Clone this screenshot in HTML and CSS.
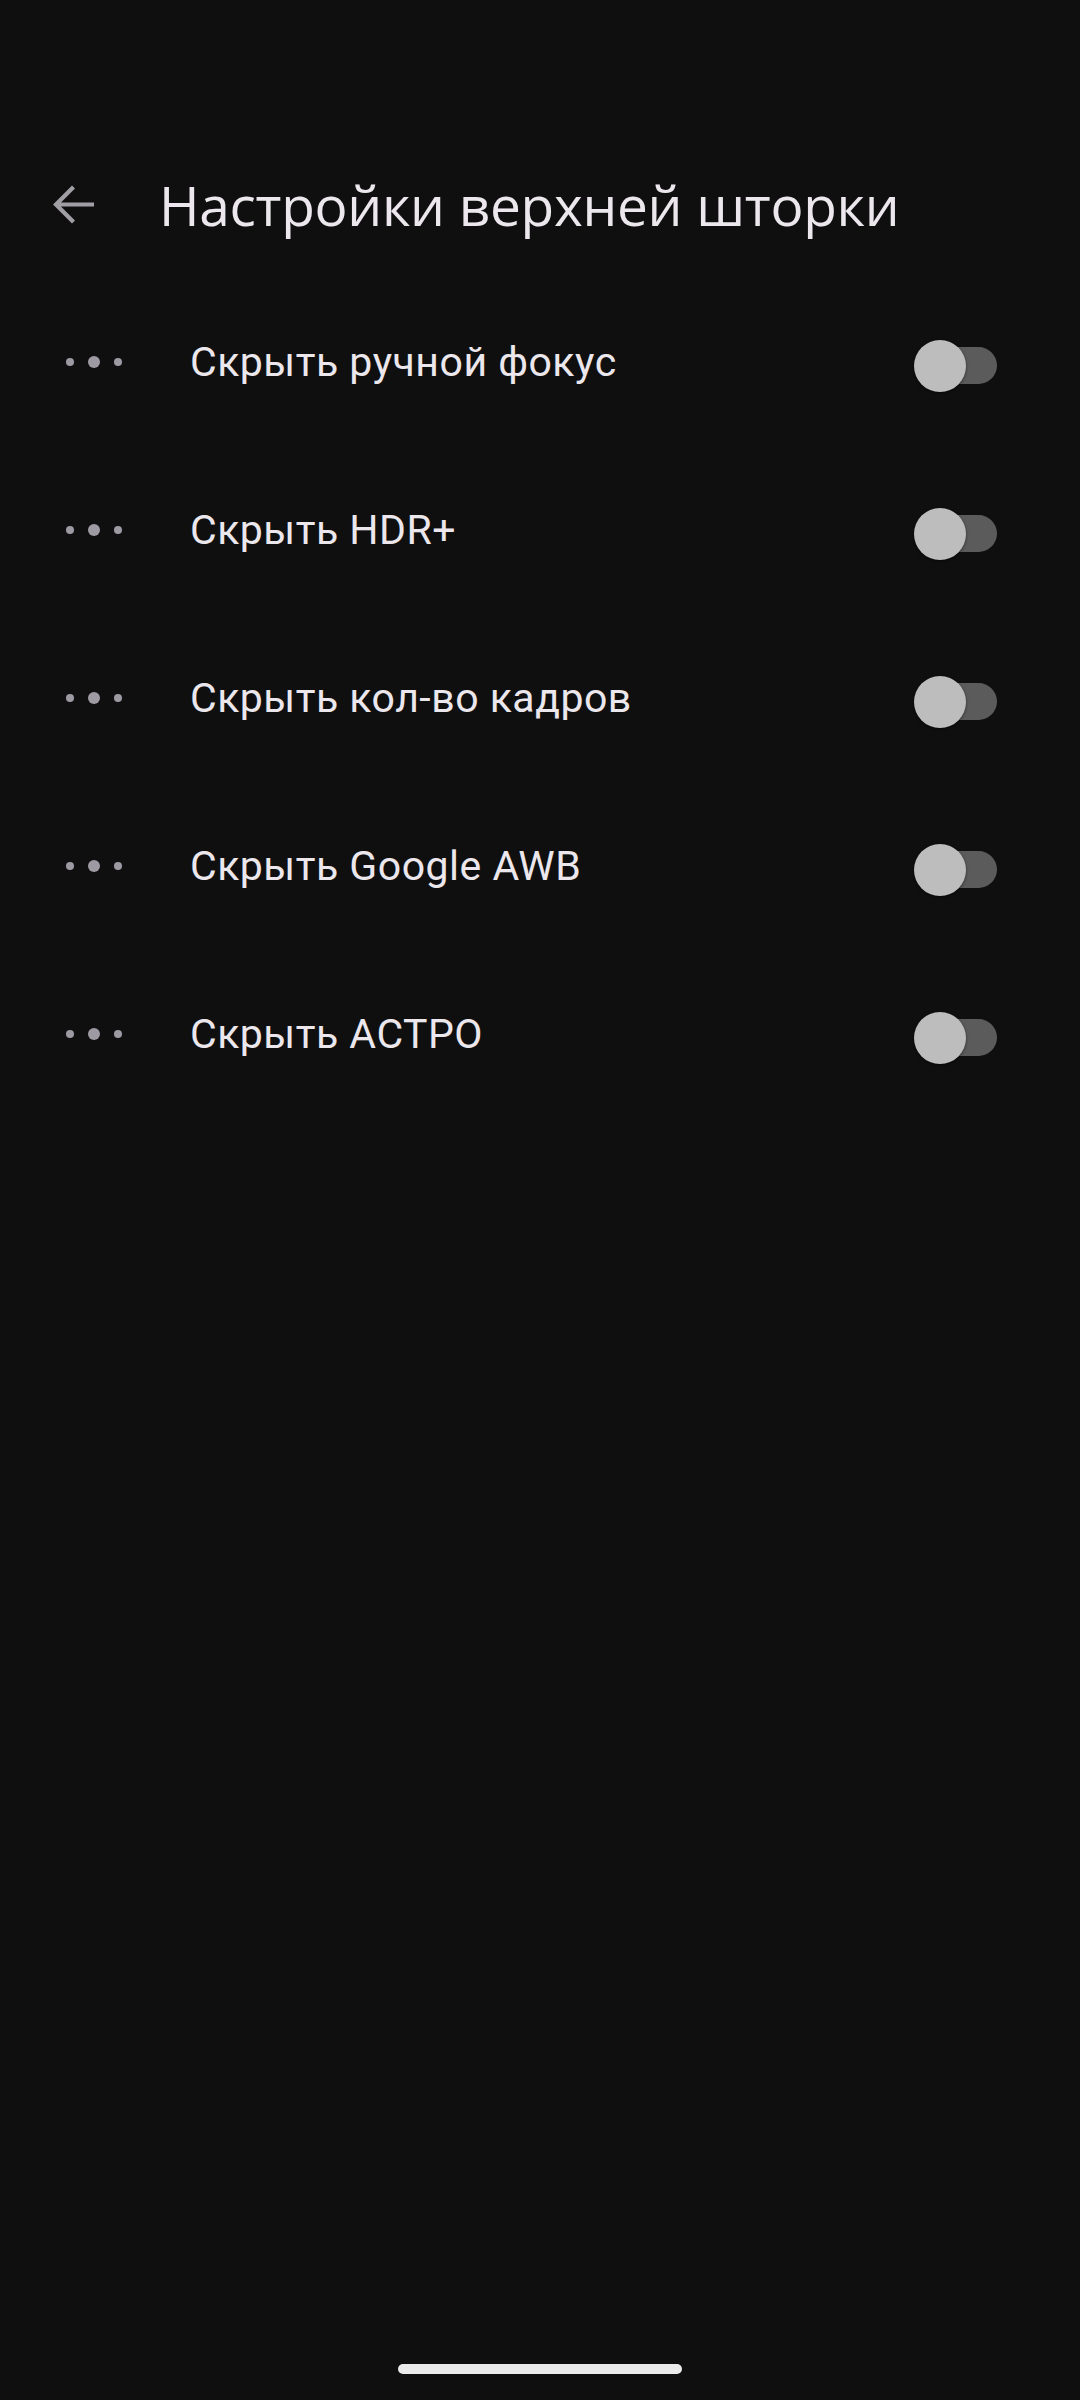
FILE: index.html
```html
<!DOCTYPE html>
<html lang="ru">

<head>
    <meta charset="UTF-8">
    <meta name="viewport" content="width=device-width, initial-scale=1.0">
    <title>Настройки верхней шторки</title>
    <link rel="stylesheet" href="styles.css">
</head>

<body>
    <div class="page">
        <div class="app-bar">
            <svg class="back" viewBox="0 0 41 41" width="41" height="41">
                <path d="M41 20.5H4 M20.5 3L3 20.5L20.5 38" fill="none" stroke="#a29ea5" stroke-width="4.2" stroke-linejoin="miter"/>
            </svg>
            <div class="title">Настройки верхней шторки</div>
        </div>

        <div class="list">
            <div class="row">
                <div class="handle"><span class="dot"></span><span class="dot big"></span><span class="dot"></span></div>
                <div class="label">Скрыть ручной фокус</div>
                <div class="switch"><span class="track"></span><span class="thumb"></span></div>
            </div>
            <div class="row">
                <div class="handle"><span class="dot"></span><span class="dot big"></span><span class="dot"></span></div>
                <div class="label">Скрыть HDR+</div>
                <div class="switch"><span class="track"></span><span class="thumb"></span></div>
            </div>
            <div class="row">
                <div class="handle"><span class="dot"></span><span class="dot big"></span><span class="dot"></span></div>
                <div class="label">Скрыть кол-во кадров</div>
                <div class="switch"><span class="track"></span><span class="thumb"></span></div>
            </div>
            <div class="row">
                <div class="handle"><span class="dot"></span><span class="dot big"></span><span class="dot"></span></div>
                <div class="label">Скрыть Google AWB</div>
                <div class="switch"><span class="track"></span><span class="thumb"></span></div>
            </div>
            <div class="row">
                <div class="handle"><span class="dot"></span><span class="dot big"></span><span class="dot"></span></div>
                <div class="label">Скрыть ACTPO</div>
                <div class="switch"><span class="track"></span><span class="thumb"></span></div>
            </div>
        </div>

        <div class="home-bar"></div>
    </div>
</body>

</html>
```

FILE: styles.css
```css
html, body {
    margin: 0;
    background: #0f0f0f;
}

.page {
    height: 2400px;
    display: flex;
    flex-direction: column;
    font-family: Roboto, "Noto Sans", sans-serif;
}

.app-bar {
    display: flex;
    align-items: center;
    box-sizing: border-box;
    height: 278px;
    padding: 130px 0 0 53px;
}

.back {
    flex-shrink: 0;
    display: block;
}

.title {
    margin-left: 65px;
    font-family: "Open Sans", sans-serif;
    font-size: 55px;
    color: #ebe7ec;
    letter-spacing: -0.3px;
    white-space: nowrap;
}

.row {
    display: flex;
    align-items: center;
    height: 168px;
    padding: 0 83px 0 66px;
}

.handle {
    display: flex;
    align-items: center;
    gap: 14px;
    width: 56px;
}

.dot {
    width: 8px;
    height: 8px;
    border-radius: 50%;
    background: #9e9aa3;
}

.dot.big {
    width: 12px;
    height: 12px;
}

.label {
    flex: 1;
    margin-left: 68px;
    font-size: 41px;
    letter-spacing: 0.5px;
    color: #ebe7ec;
}

.switch {
    position: relative;
    width: 83px;
    height: 52px;
    margin-top: 8px;
}

.switch .track {
    position: absolute;
    right: 0;
    top: 7px;
    width: 74px;
    height: 37px;
    border-radius: 19px;
    background: #5b5b5b;
}

.switch .thumb {
    position: absolute;
    left: 0;
    top: 0;
    width: 52px;
    height: 52px;
    border-radius: 50%;
    background: #bdbdbd;
    box-shadow: 0 1px 3px rgba(0, 0, 0, 0.5);
}

.home-bar {
    margin: auto auto 26px;
    width: 284px;
    height: 10px;
    border-radius: 5px;
    background: #ebebeb;
}
```
